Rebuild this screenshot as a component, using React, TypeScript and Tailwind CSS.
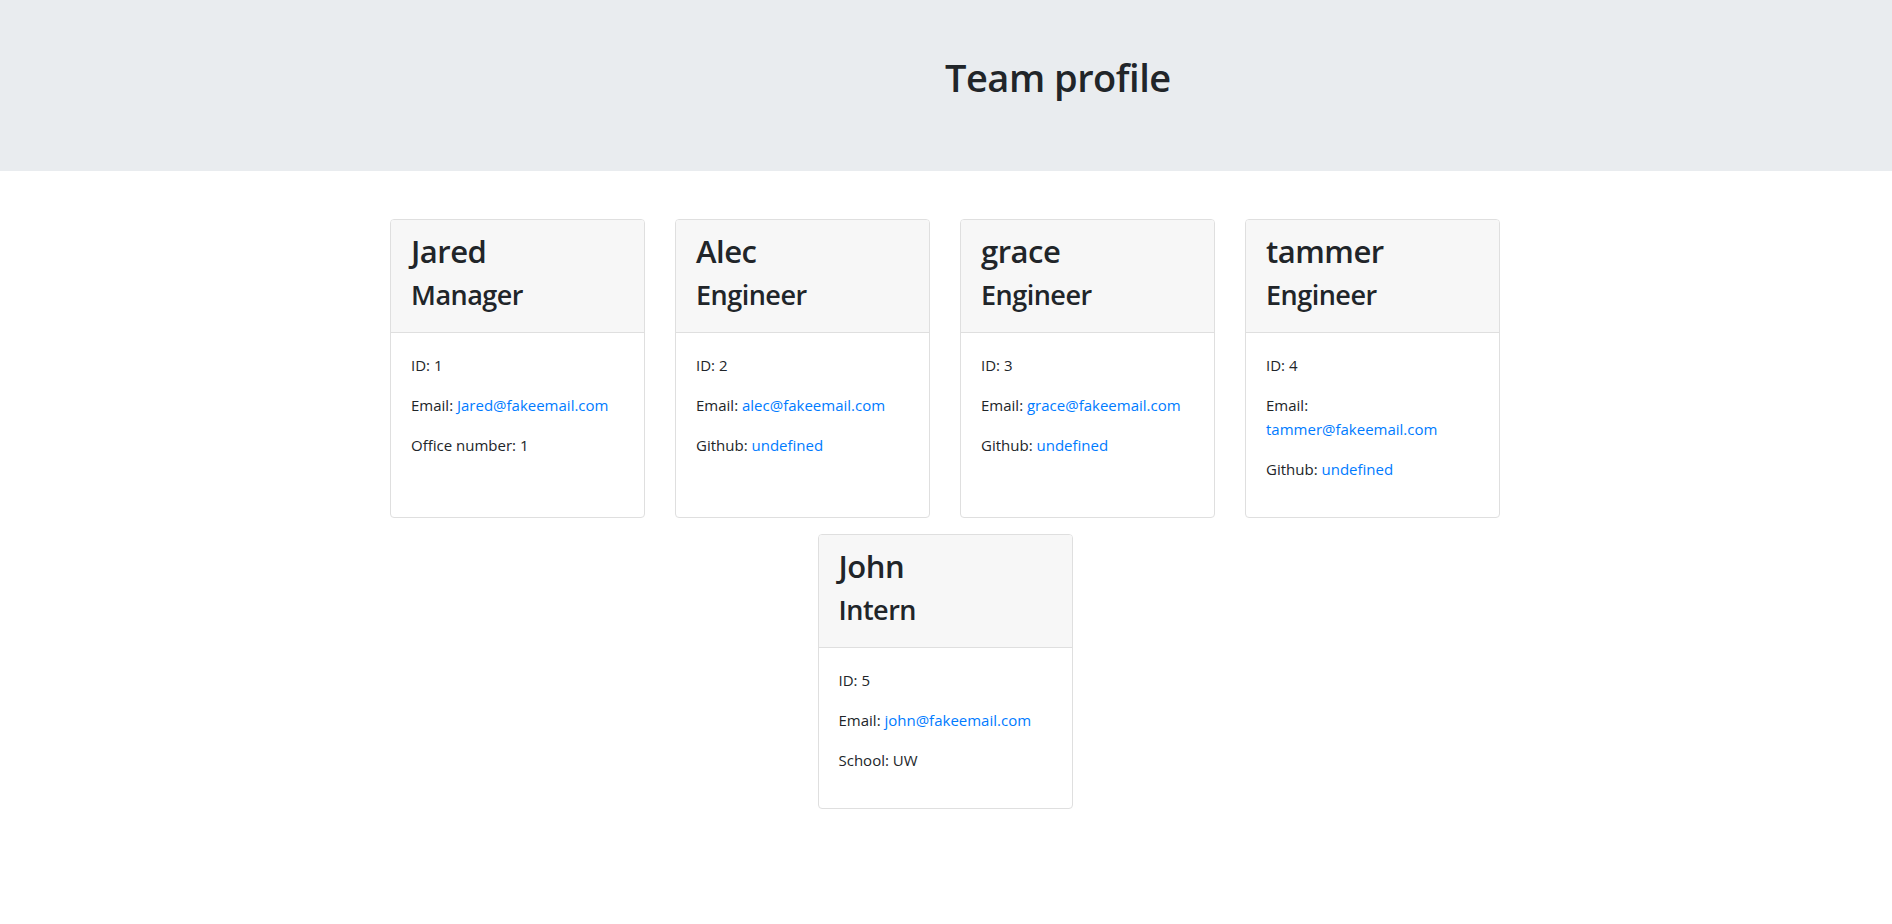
import React from "react";

type Member = {
  name: string;
  role: string;
  id: number;
  email: string;
  extraLabel: string;
  extraValue: string;
  extraLink?: boolean;
};

const row1: Member[] = [
  { name: "Jared", role: "Manager", id: 1, email: "Jared@fakeemail.com", extraLabel: "Office number", extraValue: "1" },
  { name: "Alec", role: "Engineer", id: 2, email: "alec@fakeemail.com", extraLabel: "Github", extraValue: "undefined", extraLink: true },
  { name: "grace", role: "Engineer", id: 3, email: "grace@fakeemail.com", extraLabel: "Github", extraValue: "undefined", extraLink: true },
  { name: "tammer", role: "Engineer", id: 4, email: "tammer@fakeemail.com", extraLabel: "Github", extraValue: "undefined", extraLink: true },
];

const row2: Member[] = [
  { name: "John", role: "Intern", id: 5, email: "john@fakeemail.com", extraLabel: "School", extraValue: "UW" },
];

function Card({ m }: { m: Member }) {
  return (
    <div className="w-[255px] flex flex-col rounded-[4px] border border-[#dfdfdf] bg-white">
      <div className="bg-[#f7f7f7] border-b border-[#dfdfdf] px-5 py-3 rounded-t-[3px]">
        <h2 className="text-[31px] leading-[38px] font-semibold tracking-[-0.5px] mb-2">{m.name}</h2>
        <h3 className="text-[27px] leading-[34px] font-semibold tracking-[-0.5px] mb-2">{m.role}</h3>
      </div>
      <div className="p-5 flex-1 text-[15px] leading-6">
        <p className="mb-4">ID: {m.id}</p>
        <p className="mb-4">
          Email: <a className="text-[#007bff]">{m.email}</a>
        </p>
        <p className="mb-4">
          {m.extraLabel}:{" "}
          {m.extraLink ? <a className="text-[#007bff]">{m.extraValue}</a> : m.extraValue}
        </p>
      </div>
    </div>
  );
}

export default function App() {
  return (
    <div
      className="min-h-[924px] bg-white text-[#212529]"
      style={{ fontFamily: '"Open Sans", "Noto Sans", sans-serif' }}
    >
      <header className="h-[171px] bg-[#e9ecef] pt-[53px]">
        <h1 className="ml-[945px] text-[38px] leading-[48px] font-semibold tracking-[-0.5px]">Team profile</h1>
      </header>
      <main className="mt-12 w-[1110px] ml-[390px]">
        <div className="flex gap-[30px] items-stretch">
          {row1.map((m) => (
            <Card key={m.id} m={m} />
          ))}
        </div>
        <div className="flex justify-center mt-4">
          {row2.map((m) => (
            <Card key={m.id} m={m} />
          ))}
        </div>
      </main>
    </div>
  );
}
